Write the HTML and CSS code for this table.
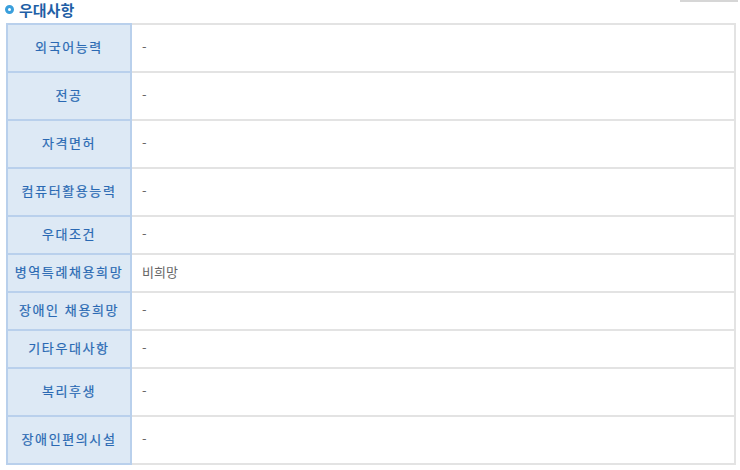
FILE: index.html
```html
<!DOCTYPE html>
<html lang="ko">
<head>
<meta charset="utf-8">
<link rel="stylesheet" href="styles.css">
</head>
<body>
<div class="page">
  <div class="title-row">
    <h3 class="title"><span class="bullet"></span>우대사항</h3>
    <span class="top-btn"></span>
  </div>
  <table class="info">
    <tr class="tall"><th>외국어능력</th><td>-</td></tr>
    <tr class="tall"><th>전공</th><td>-</td></tr>
    <tr class="tall"><th>자격면허</th><td>-</td></tr>
    <tr class="tall"><th>컴퓨터활용능력</th><td>-</td></tr>
    <tr class="short"><th>우대조건</th><td>-</td></tr>
    <tr class="short"><th>병역특례채용희망</th><td>비희망</td></tr>
    <tr class="short"><th>장애인 채용희망</th><td>-</td></tr>
    <tr class="short"><th>기타우대사항</th><td>-</td></tr>
    <tr class="tall"><th>복리후생</th><td>-</td></tr>
    <tr class="tall"><th>장애인편의시설</th><td>-</td></tr>
  </table>
</div>
</body>
</html>
```

FILE: styles.css
```css
html, body {
  margin: 0;
  padding: 0;
  background: #ffffff;
}
body {
  font-family: "Noto Sans CJK KR", "Noto Sans", sans-serif;
  font-size: 13px;
  color: #666666;
}
.page {
  width: 730px;
  padding-left: 6px;
}
.title-row {
  display: flex;
  justify-content: space-between;
  align-items: flex-start;
  height: 23px;
}
.title {
  margin: 0;
  margin-left: -1px;
  display: flex;
  align-items: center;
  gap: 5px;
  font-size: 15px;
  font-weight: 700;
  color: #1f5fa6;
  line-height: 19px;
}
.bullet {
  width: 3px;
  height: 3px;
  border: 3px solid #3a9fdc;
  border-radius: 50%;
  background: #ffffff;
}
.top-btn {
  width: 58px;
  height: 2px;
  margin-right: -2px;
  background: #d6d6d6;
}
.info {
  width: 730px;
  border-collapse: collapse;
  table-layout: fixed;
}
.info th {
  width: 122px;
  background: #dde9f5;
  border: 2px solid #b9d0ec;
  color: #2a69b3;
  font-weight: 400;
  font-size: 13px;
  text-align: center;
  padding: 0 0 3px 0;
  letter-spacing: 1.6px;
  -webkit-text-stroke: 0.2px #2a69b3;
}
.info td {
  border: 2px solid #e3e3e3;
  padding: 0 0 3px 10px;
  color: #666666;
  font-size: 13px;
}
.info th + td {
  border-left-color: #b9d0ec;
}
.tall { height: 48px; }
.short { height: 38px; }
```
